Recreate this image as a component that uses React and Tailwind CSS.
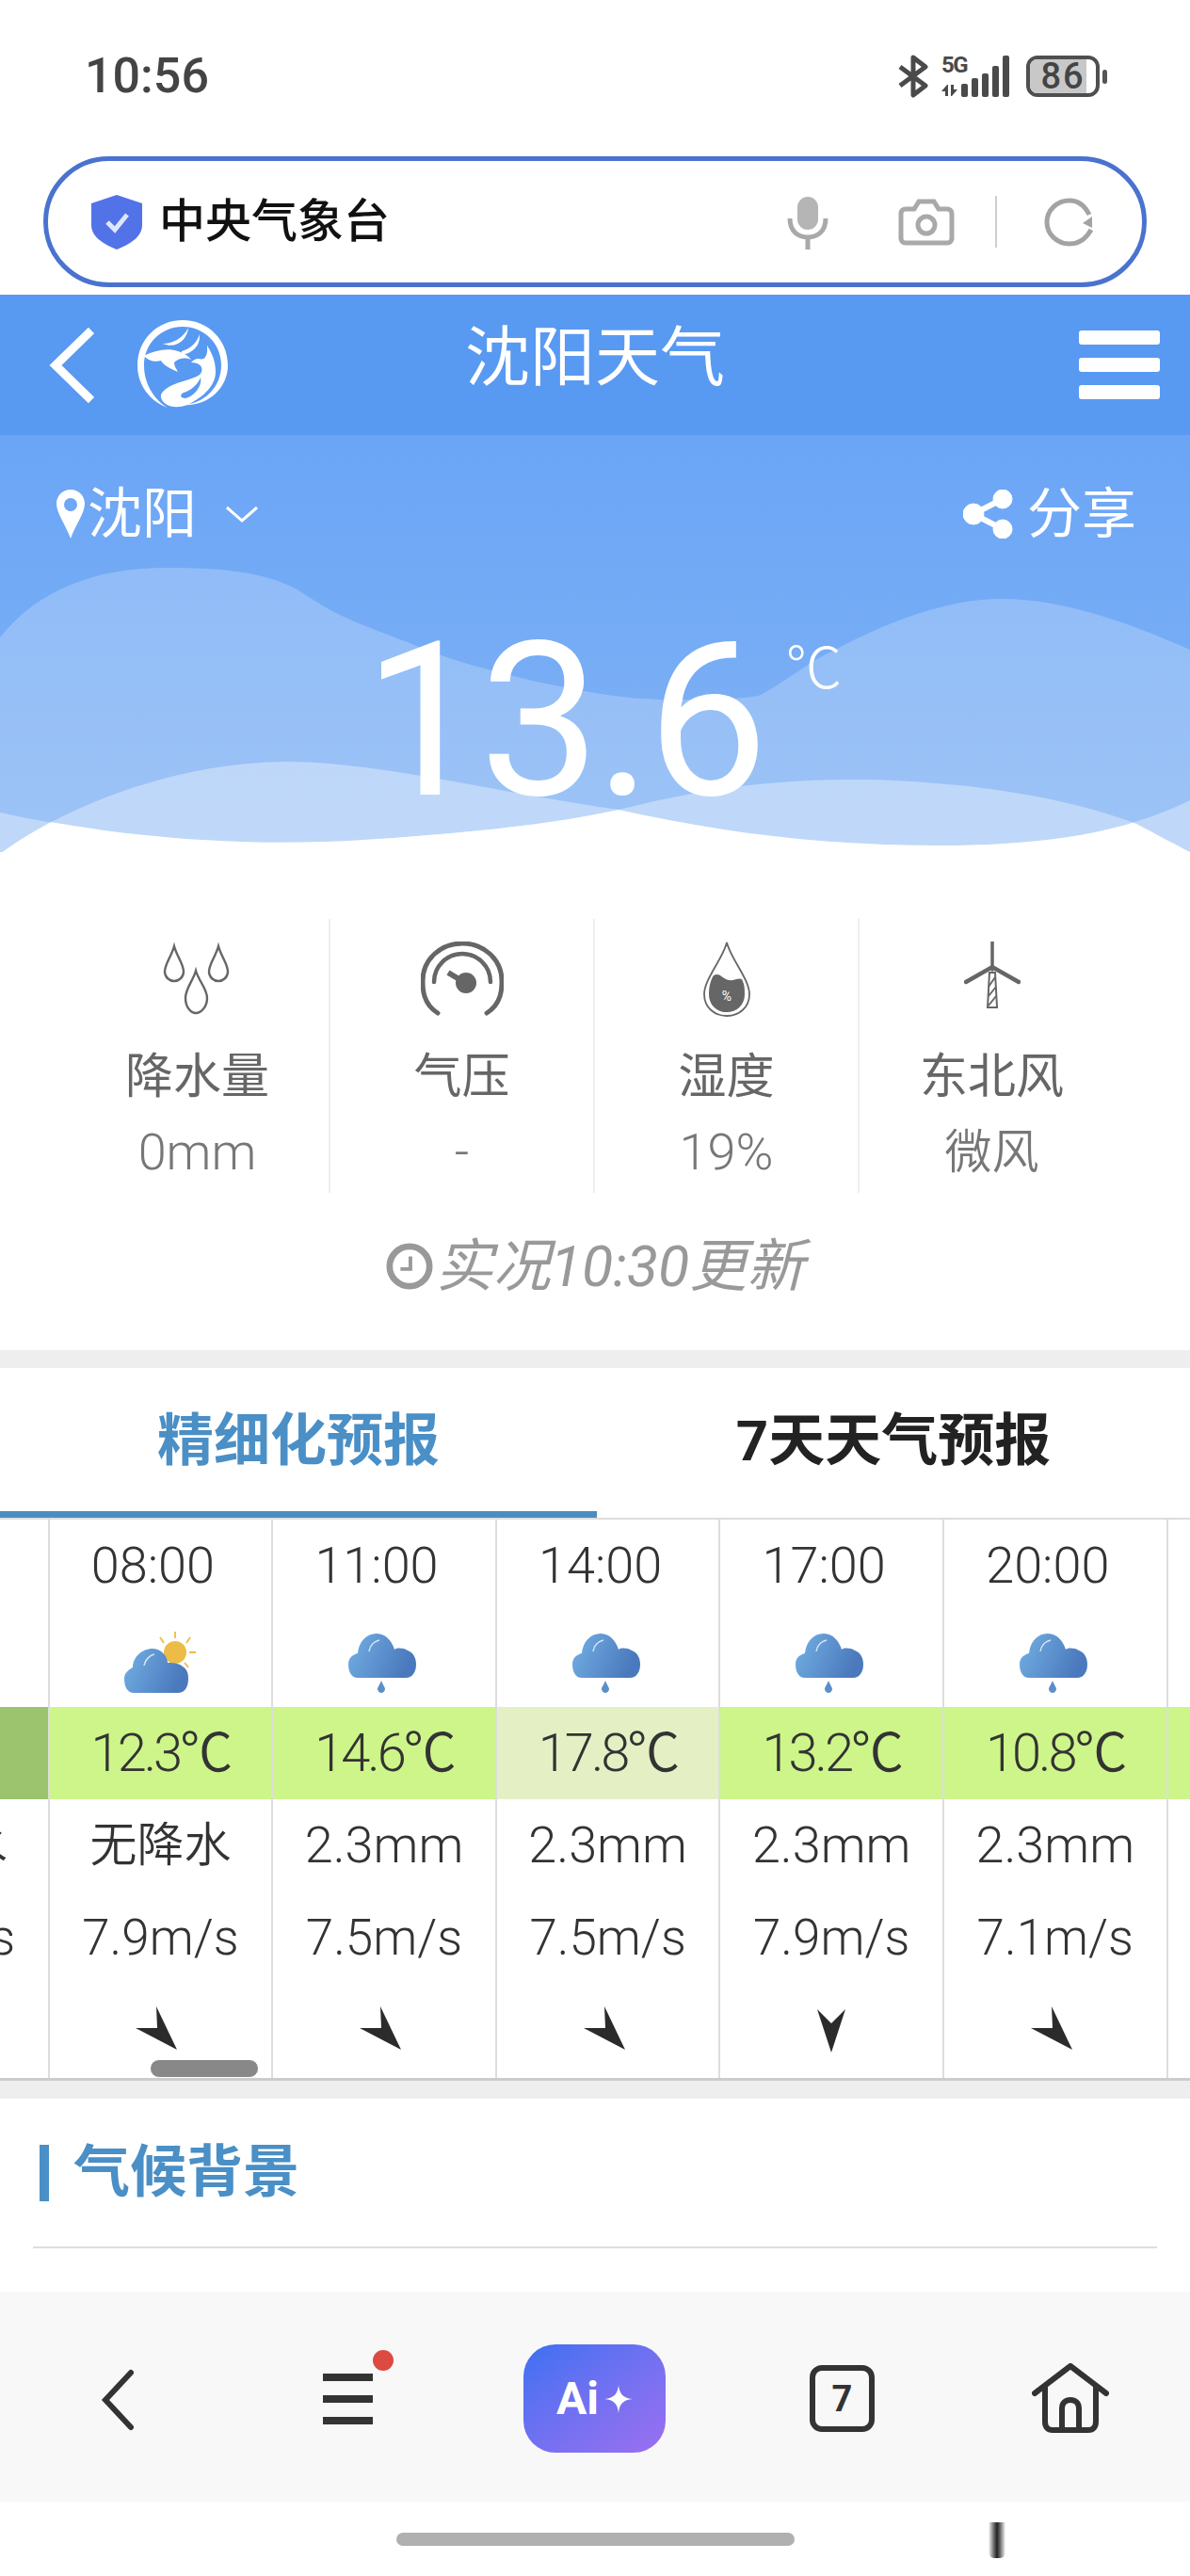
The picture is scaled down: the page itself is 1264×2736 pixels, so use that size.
// App.jsx — 沈阳天气 mobile page inside a browser shell
import React from 'react'

const forecast = [
  { time: '05:00', icon: 'sun', temp: '9.9℃', rain: '无降水', wind: '7.9m/s', bg: 'bg-[#9cc46f]', arrow: 'se' },
  { time: '08:00', icon: 'sun', temp: '12.3℃', rain: '无降水', wind: '7.9m/s', bg: 'bg-[#cdf58a]', arrow: 'se' },
  { time: '11:00', icon: 'rain', temp: '14.6℃', rain: '2.3mm', wind: '7.5m/s', bg: 'bg-[#cdf58a]', arrow: 'se' },
  { time: '14:00', icon: 'rain', temp: '17.8℃', rain: '2.3mm', wind: '7.5m/s', bg: 'bg-[#e4f0c4]', arrow: 'se' },
  { time: '17:00', icon: 'rain', temp: '13.2℃', rain: '2.3mm', wind: '7.9m/s', bg: 'bg-[#cdf58a]', arrow: 's' },
  { time: '20:00', icon: 'rain', temp: '10.8℃', rain: '2.3mm', wind: '7.1m/s', bg: 'bg-[#cdf58a]', arrow: 'se' },
  { time: '23:00', icon: 'rain', temp: '9.8℃', rain: '2.3mm', wind: '7.1m/s', bg: 'bg-[#cdf58a]', arrow: 'se' },
]

function StatusIcons() {
  return (
    <div className="flex items-center">
      <svg width="34" height="46" viewBox="0 0 34 46" fill="none" stroke="#4a4a4a" strokeWidth="5">
        <path d="M3 13 L30 33 L17 43 V3 L30 13 L3 33" strokeLinejoin="round" />
      </svg>
      <div className="relative w-[72px] h-[44px] ml-[13px]">
        <span className="absolute left-0 top-[-4px] text-[24px] leading-[28px] font-bold text-[#4a4a4a] tracking-[-1.5px]">5G</span>
        <svg className="absolute left-0 bottom-0" width="72" height="44" viewBox="0 0 72 44" fill="#4a4a4a">
          <path d="M6 31 L0 38 H4 V43 H7 V31Z M11 43 L17 36 H13 V31 H10 V43Z" />
          <rect x="21" y="30" width="7" height="14" rx="2" />
          <rect x="32" y="24" width="7" height="20" rx="2" />
          <rect x="43" y="19" width="7" height="25" rx="2" />
          <rect x="54" y="11" width="7" height="33" rx="2" />
          <rect x="65" y="0" width="7" height="44" rx="2" />
        </svg>
      </div>
      <div className="relative ml-[18px] w-[78px] h-[44px] rounded-[12px] border-[4px] border-[#4f4f4f] overflow-hidden flex items-center justify-center">
        <div className="absolute left-0 top-0 bottom-0 w-[60px] bg-[#c8c8c8]" />
        <span className="relative text-[38px] leading-none font-medium text-[#444] tracking-[2px]">86</span>
      </div>
      <div className="w-[5px] h-[15px] ml-[3px] rounded-full bg-[#555]" />
    </div>
  )
}

function AddressBar() {
  return (
    <div className="mx-[46px] h-[139px] rounded-[70px] border-[5px] border-[#4a72cf] bg-white flex items-center pl-[46px] pr-[50px]">
      <svg width="54" height="58" viewBox="0 0 54 58">
        <path d="M27 0 L54 9 V32 C54 45 40 53 27 58 C14 53 0 45 0 32 V9Z" fill="#5273e8" />
        <path d="M17 29 L25 37 L38 21" fill="none" stroke="#dfe6ff" strokeWidth="5" />
      </svg>
      <span className="ml-[18px] text-[49px] leading-none font-medium text-[#111]">中央气象台</span>
      <svg className="ml-auto" width="44" height="60" viewBox="0 0 44 60" fill="none" stroke="#a9a9a9" strokeWidth="5">
        <rect x="11" y="3" width="22" height="35" rx="11" fill="#b5b5b5" stroke="none" />
        <path d="M3 26 C3 40 12 46 22 46 C32 46 41 40 41 26 M22 46 V59" />
      </svg>
      <svg className="ml-[74px]" width="60" height="50" viewBox="0 0 60 50" fill="none" stroke="#a9a9a9" strokeWidth="5">
        <path d="M8 11 H17 L22 3 H38 L43 11 H52 C55 11 57 13 57 16 V42 C57 45 55 47 52 47 H8 C5 47 3 45 3 42 V16 C3 13 5 11 8 11Z" />
        <circle cx="30" cy="28" r="9" />
      </svg>
      <div className="ml-[43px] w-[2px] h-[55px] bg-[#cfcfcf]" />
      <svg className="ml-[50px]" width="54" height="52" viewBox="0 0 54 52" fill="none" stroke="#a3a3a3" strokeWidth="5">
        <path d="M48 18 C43 8 35 3 27 3 C14 3 3 13 3 26 C3 39 14 49 27 49 C37 49 45 43 50 34" />
        <path d="M51 20 L51 32 L41 27" stroke="none" fill="#a3a3a3" />
      </svg>
    </div>
  )
}

function DragonLogo() {
  return (
    <svg width="98" height="98" viewBox="0 0 98 98" fill="#fff">
      <path d="M49 1 C22 1 1 22 1 49 C1 70 14 87 33 94 C18 85 8 68 8 49 C8 26 26 8 49 8 C72 8 90 26 90 49 C90 72 72 90 49 91 C75 93 97 74 97 49 C97 22 76 1 49 1Z" />
      {/* antlers */}
      <path d="M28 26 C38 26 50 20 55 9 C54 22 42 32 28 26Z" />
      <path d="M48 34 C56 32 64 26 67 16 C68 28 60 36 48 38Z" />
      {/* head */}
      <path d="M8 39 C18 34 32 30 44 34 C50 36 54 38 58 43 C50 40 44 42 40 46 C40 50 42 52 44 56 C34 52 28 48 26 44 C20 46 12 44 8 39Z" />
      {/* body */}
      <path d="M58 46 C68 46 72 52 68 58 C60 66 34 66 26 80 C24 90 40 98 56 90 C72 82 84 70 84 56 C84 44 80 36 75 28 C76 40 72 44 66 42 C62 42 60 44 58 46Z" />
      <path d="M50 78 C58 76 66 68 68 62 C70 70 62 82 52 84 C46 84 46 80 50 78Z" fill="#5899f2" />
    </svg>
  )
}

function Header() {
  return (
    <div className="relative h-[149px] bg-[#5899f2] flex items-center pl-[52px] pr-[32px]">
      <svg width="48" height="80" viewBox="0 0 48 80" fill="none" stroke="#fff" strokeWidth="9">
        <path d="M45 3 L7 40 L45 77" />
      </svg>
      <div className="ml-[45px]"><DragonLogo /></div>
      <span className="absolute left-0 right-0 top-[33px] text-center text-[69px] leading-[70px] text-white">沈阳天气</span>
      <div className="ml-auto w-[86px] flex flex-col gap-[14px]">
        <div className="h-[15px] rounded-[3px] bg-white" />
        <div className="h-[15px] rounded-[3px] bg-white" />
        <div className="h-[15px] rounded-[3px] bg-white" />
      </div>
    </div>
  )
}

const WAVE_A = 'M0 445 C60 400 180 347 306 347 C400 347 530 380 657 398 C780 425 880 436 1000 436 C1100 436 1190 425 1264 388 V460 H0Z'
const WAVE_B = 'M0 401 C40 410 60 412 110 420 C200 432 300 436 387 430 C480 424 580 415 657 398 C720 382 800 366 903 366 C1000 366 1120 380 1207 413 C1230 425 1250 436 1264 443 V460 H0Z'

function Hero() {
  return (
    <div className="relative h-[443px] bg-gradient-to-b from-[#6aa5f6] to-[#82b3f4]">
      <svg className="absolute left-0 top-0" width="1264" height="460" viewBox="0 0 1264 460">
        <defs>
          <clipPath id="waveA">
            <path d={WAVE_A} />
          </clipPath>
        </defs>
        <path d="M0 215 C40 165 100 141 177 141 C235 141 285 145 322 168 C360 195 395 205 435 221 C480 240 520 250 565 261 C620 272 660 281 710 281 C745 281 775 282 806 277 C835 262 860 240 887 228 C950 195 1010 174 1064 174 C1130 174 1200 200 1264 228 V460 H0Z" fill="#fff" fillOpacity="0.22" />
        <path d={WAVE_A} fill="#fff" fillOpacity="0.36" />
        <path d={WAVE_B} fill="#fff" fillOpacity="0.36" />
        <path d={WAVE_B} fill="#fff" clipPath="url(#waveA)" />
      </svg>
      <div className="relative flex items-center h-[64px] top-[52px] pl-[60px] pr-[57px] text-white">
        <svg width="30" height="52" viewBox="0 0 30 52">
          <path fillRule="evenodd" d="M15 0 C24 0 30 7 30 15 C30 25 20 38 15 52 C10 38 0 25 0 15 C0 7 6 0 15 0Z M15 9 A7 7 0 1 0 15.01 23 A7 7 0 1 0 15 9Z" fill="#fff" />
        </svg>
        <span className="ml-[3px] text-[58px] leading-none">沈阳</span>
        <svg className="ml-[30px]" width="36" height="20" viewBox="0 0 36 20" fill="none" stroke="#fff" strokeWidth="3">
          <path d="M2 3 L18 17 L34 3" />
        </svg>
        <svg className="ml-auto" width="53" height="52" viewBox="0 0 53 52" fill="#fff" stroke="#fff">
          <circle cx="42" cy="10" r="10" />
          <circle cx="42" cy="42" r="10" />
          <circle cx="11" cy="26" r="11" />
          <path d="M11 26 L42 10 M11 26 L42 42" strokeWidth="6" />
        </svg>
        <span className="ml-[15px] text-[58px] leading-none">分享</span>
      </div>
      <div className="absolute left-[386px] top-[190px] flex items-start text-white">
        <span className="text-[228px] leading-[228px] font-normal tracking-[-5px]">13.6</span>
        <span className="ml-[24px] mt-[29px] text-[60px] leading-[60px] font-light">℃</span>
      </div>
    </div>
  )
}

function RainDrops() {
  return (
    <svg width="76" height="78" viewBox="0 0 76 78" fill="none" stroke="#666" strokeWidth="2.4">
      <path d="M13 5 C10 16 3 24 3 32 C3 38 8 42 13 42 C18 42 23 38 23 32 C23 24 16 16 13 5Z" />
      <path d="M60 5 C57 16 50 24 50 32 C50 38 55 42 60 42 C65 42 70 38 70 32 C70 24 63 16 60 5Z" />
      <path d="M36 31 C33 42 25 50 25 60 C25 70 31 76 36 76 C41 76 48 70 48 60 C48 50 39 42 36 31Z" />
    </svg>
  )
}

function Gauge() {
  return (
    <svg width="88" height="80" viewBox="0 0 88 80" fill="none" stroke="#666">
      <path d="M18 76 C2 66 2 50 2 42 C2 18 22 2 44 2 C66 2 86 18 86 42 C86 50 86 66 70 76" strokeWidth="5" strokeLinecap="round" />
      <path d="M14 43 C14 26 28 13 44 13 C60 13 74 26 74 43" strokeWidth="4.5" strokeLinecap="round" />
      <circle cx="48" cy="44" r="11" fill="#666" stroke="none" />
      <path d="M29 33 L44 42" strokeWidth="6" />
    </svg>
  )
}

function HumidityDrop() {
  return (
    <svg width="52" height="80" viewBox="0 0 52 80" fill="none">
      <path d="M26 1 C22 18 2 40 2 56 C2 70 13 79 26 79 C39 79 50 70 50 56 C50 40 30 18 26 1Z" stroke="#666" strokeWidth="1.8" />
      <path d="M7 56 C7 50 8 42 12 36 C18 32 22 40 28 41 C34 42 38 38 42 40 C45 46 45 50 45 56 C45 68 36 75 26 75 C16 75 7 68 7 56Z" fill="#666" />
      <text x="26" y="63" textAnchor="middle" fontSize="14" fill="#fff">%</text>
    </svg>
  )
}

function Turbine() {
  return (
    <svg width="60" height="72" viewBox="0 0 60 72" fill="none" stroke="#666">
      <path d="M30 0 V30" strokeWidth="3.5" strokeLinecap="round" />
      <path d="M2 43 L30 27 L58 43" strokeWidth="4.5" strokeLinecap="round" />
      <path d="M27 33 H33 L35 70 H25Z" strokeWidth="2" fill="#fff" />
      <path d="M26 48 L33 38 M26 58 L34 48 M26 68 L34 58" strokeWidth="2" />
    </svg>
  )
}

function Metric({ icon, label, value, last, cjk }) {
  return (
    <div className={`w-[281px] h-[291px] flex flex-col items-center ${last ? '' : 'border-r-2 border-[#eeeeee]'}`}>
      <div className="h-[102px] pt-[24px] flex items-start justify-center">{icon}</div>
      <div className="mt-[36px] text-[51px] leading-[60px] text-[#666]">{label}</div>
      <div className={`mt-[20px] leading-[60px] text-[#777] font-[350] ${cjk ? 'text-[50px]' : 'text-[54px]'}`}>{value}</div>
    </div>
  )
}

function Metrics() {
  return (
    <div className="bg-white h-[529px] pt-[71px]">
      <div className="flex pl-[70px]">
        <Metric icon={<RainDrops />} label="降水量" value="0mm" />
        <Metric icon={<Gauge />} label="气压" value="-" />
        <Metric icon={<HumidityDrop />} label="湿度" value="19%" />
        <Metric icon={<Turbine />} label="东北风" value="微风" last cjk />
      </div>
      <div className="mt-[46px] flex items-center justify-center text-[#999]">
        <svg width="50" height="52" viewBox="0 0 52 52" fill="none" stroke="#999">
          <circle cx="26" cy="26" r="22" strokeWidth="7" />
          <path d="M27 15 V29 H16" strokeWidth="4" />
        </svg>
        <span className="ml-[3px] text-[61px] leading-[64px] italic font-normal">实况10:30更新</span>
      </div>
    </div>
  )
}

function Tabs() {
  return (
    <div className="flex h-[161px] bg-white border-b-2 border-[#dddddd]">
      <div className="w-[634px] flex items-center justify-center text-[60px] leading-none font-bold text-[#4a8fc6] border-b-[7px] border-[#4a8dc3] pt-[4px]">
        精细化预报
      </div>
      <div className="flex-1 flex items-center justify-center text-[60px] leading-none font-bold text-[#222] pb-[3px]">
        7天天气预报
      </div>
    </div>
  )
}

function CloudGradient({ id }) {
  return (
    <defs>
      <linearGradient id={id} x1="0" y1="0" x2="1" y2="0.3">
        <stop offset="0" stopColor="#74b0e4" />
        <stop offset="1" stopColor="#4a79bd" />
      </linearGradient>
    </defs>
  )
}

function RainCloud({ id }) {
  return (
    <svg width="72" height="63" viewBox="0 0 72 63">
      <CloudGradient id={id} />
      <path d="M10 47 C3 47 0 40 0 33 C0 27 3 23 10 21 C11 9 19 0 30 0 C41 0 47 10 49 17 C52 15 58 15 63 18 C69 20 72 26 72 33 C72 41 68 47 61 47Z" fill={`url(#${id})`} />
      <path d="M22 19 C23 12 28 8 33 7" fill="none" stroke="#d5e8f8" strokeWidth="1.5" />
      <path d="M35 50 C37 55 39 57 39 59 C39 61 37 63 35 63 C33 63 31 61 31 59 C31 57 33 55 35 50Z" fill="#5a8fc8" />
    </svg>
  )
}

function SunCloud({ id }) {
  return (
    <svg width="76" height="66" viewBox="0 0 76 66">
      <CloudGradient id={id} />
      <circle cx="54" cy="22" r="12" fill="#ecbc46" />
      <path d="M54 0 V7 M38 6 L42 12 M70 6 L66 12 M76 22 H69 M68 38 L64 33" stroke="#ecbc46" strokeWidth="1.8" />
      <path d="M10 65 C3 65 0 58 0 50 C0 44 4 41 9 38 C9 27 19 18 30 18 C41 18 46 28 46 33 C50 33 58 33 62 37 C67 40 68 45 68 50 C68 59 64 65 57 65Z" fill={`url(#${id})`} />
      <path d="M21 36 C22 30 27 25 32 24" fill="none" stroke="#d5e8f8" strokeWidth="1.5" />
    </svg>
  )
}

function WindArrow({ dir }) {
  return dir === 's' ? (
    <svg className="mt-[2px]" width="30" height="46" viewBox="0 0 30 46">
      <path d="M15 46 L0 0 L15 15 L30 0Z" fill="#2b2b2b" />
    </svg>
  ) : (
    <svg className="mt-[-5px] mr-[8px]" width="44" height="46" viewBox="0 0 44 46">
      <path d="M44 46 L22 0 L23 23 L0 23Z" fill="#2b2b2b" />
    </svg>
  )
}

function Column({ item, index }) {
  const sunny = item.icon === 'sun'
  return (
    <div className="w-[237.6px] shrink-0 flex flex-col items-center border-r-2 border-[#dddddd]">
      <div className="h-[199px] w-full flex flex-col items-center">
        <div className="mt-[19px] pr-[16px] text-[54px] leading-[60px] font-[350] text-[#333]">{item.time}</div>
        <div className={sunny ? 'mt-[40px]' : 'mt-[42px] pr-[4px]'}>
          {sunny ? <SunCloud id={`sun-${index}`} /> : <RainCloud id={`rain-${index}`} />}
        </div>
      </div>
      <div className={`${item.bg} w-full h-[98px] flex items-center justify-center text-[56px] leading-none font-[350] text-[#333] tracking-[-3px]`}>
        {item.temp}
      </div>
      <div className={`mt-[19px] h-[60px] flex items-center leading-none font-[350] text-[#333] whitespace-nowrap ${item.rain === '无降水' ? 'text-[50px]' : 'text-[54px]'}`}>{item.rain}</div>
      <div className="mt-[38px] h-[60px] flex items-center text-[53px] leading-none font-[350] text-[#333] whitespace-nowrap">{item.wind}</div>
      <div className="mt-[43px] h-[50px] flex items-center"><WindArrow dir={item.arrow} /></div>
    </div>
  )
}

function ForecastTable() {
  return (
    <div className="relative h-[596px] bg-white border-b-[3px] border-[#cccccc] overflow-hidden">
      <div className="flex h-full -ml-[185px]">
        {forecast.map((item, i) => <Column key={i} item={item} index={i} />)}
      </div>
      {/* scroll thumb */}
      <div className="absolute left-[159px] bottom-0 w-[116px] h-[20px] rounded-full bg-[#888] border border-white" />
    </div>
  )
}

function Climate() {
  return (
    <div className="bg-white h-[205px] px-[35px]">
      <div className="h-[159px] flex items-center pl-[7px] border-b-2 border-[#dddddd]">
        <div className="w-[10px] h-[60px] bg-[#4a8fc6]" />
        <span className="ml-[26px] text-[60px] leading-none font-bold text-[#4a8fc6]">气候背景</span>
      </div>
    </div>
  )
}

function BottomNav() {
  return (
    <div className="relative h-[223px] bg-[#f8f8f8]">
      <svg className="absolute left-[106px] top-[82px]" width="38" height="66" viewBox="0 0 38 66" fill="none" stroke="#333" strokeWidth="6" strokeLinecap="round">
        <path d="M33 4 L6 33 L33 62" />
      </svg>
      <div className="absolute left-[343px] top-[87px] w-[53px] flex flex-col gap-[15px]">
        <div className="h-[8px] bg-[#333]" />
        <div className="h-[8px] bg-[#333]" />
        <div className="h-[8px] bg-[#333]" />
      </div>
      <div className="absolute left-[396px] top-[62px] w-[22px] h-[22px] rounded-full bg-[#dc4a42]" />
      <div className="absolute left-[556px] top-[56px] w-[151px] h-[115px] rounded-[34px] bg-gradient-to-br from-[#3a70f2] to-[#9a6ff0] flex items-center justify-center">
        <span className="text-[48px] leading-none font-bold text-white mr-[6px]">Ai</span>
        <svg width="30" height="30" viewBox="0 0 30 30">
          <path d="M15 0 C16 10 20 14 30 15 C20 16 16 20 15 30 C14 20 10 16 0 15 C10 14 14 10 15 0Z" fill="#fff" />
        </svg>
      </div>
      <div className="absolute left-[860px] top-[78px] w-[69px] h-[71px] rounded-[13px] border-[6px] border-[#333] flex items-center justify-center text-[38px] leading-none font-bold text-[#333]">7</div>
      <svg className="absolute left-[1096px] top-[76px]" width="82" height="74" viewBox="0 0 82 74" fill="none" stroke="#333" strokeWidth="6" strokeLinecap="round" strokeLinejoin="round">
        <path d="M3 32 L41 3 L79 32" />
        <path d="M14 26 V62 C14 68 17 71 22 71 H60 C65 71 68 68 68 62 V26" />
        <path d="M32 71 V48 C32 42 36 39 41 39 C46 39 50 42 50 48 V71" />
      </svg>
    </div>
  )
}

export default function App() {
  return (
    <div className="w-[1264px] h-[2736px] overflow-hidden bg-white" style={{ fontFamily: 'Roboto, "Noto Sans CJK SC", sans-serif' }}>
      <div className="h-[166px] flex items-start justify-between pt-[58px] pl-[90px] pr-[88px]">
        <span className="text-[52px] leading-[46px] font-medium text-[#444]">10:56</span>
        <StatusIcons />
      </div>
      <AddressBar />
      <div className="h-[8px] bg-white" />
      <Header />
      <Hero />
      <Metrics />
      <div className="h-[19px] bg-[#eeeeee]" />
      <Tabs />
      <ForecastTable />
      <div className="h-[19px] bg-[#eeeeee]" />
      <Climate />
      <BottomNav />
      <div className="relative flex justify-center pt-[33px]">
        <div className="w-[423px] h-[14px] rounded-full bg-[#b0b0b0]" />
        {/* leftover of the watermark over the home bar */}
        <div className="absolute left-[1050px] top-[22px] w-[18px] h-[38px] rounded-b-[6px] bg-gradient-to-r from-white via-[#222] to-white" />
      </div>
    </div>
  )
}
